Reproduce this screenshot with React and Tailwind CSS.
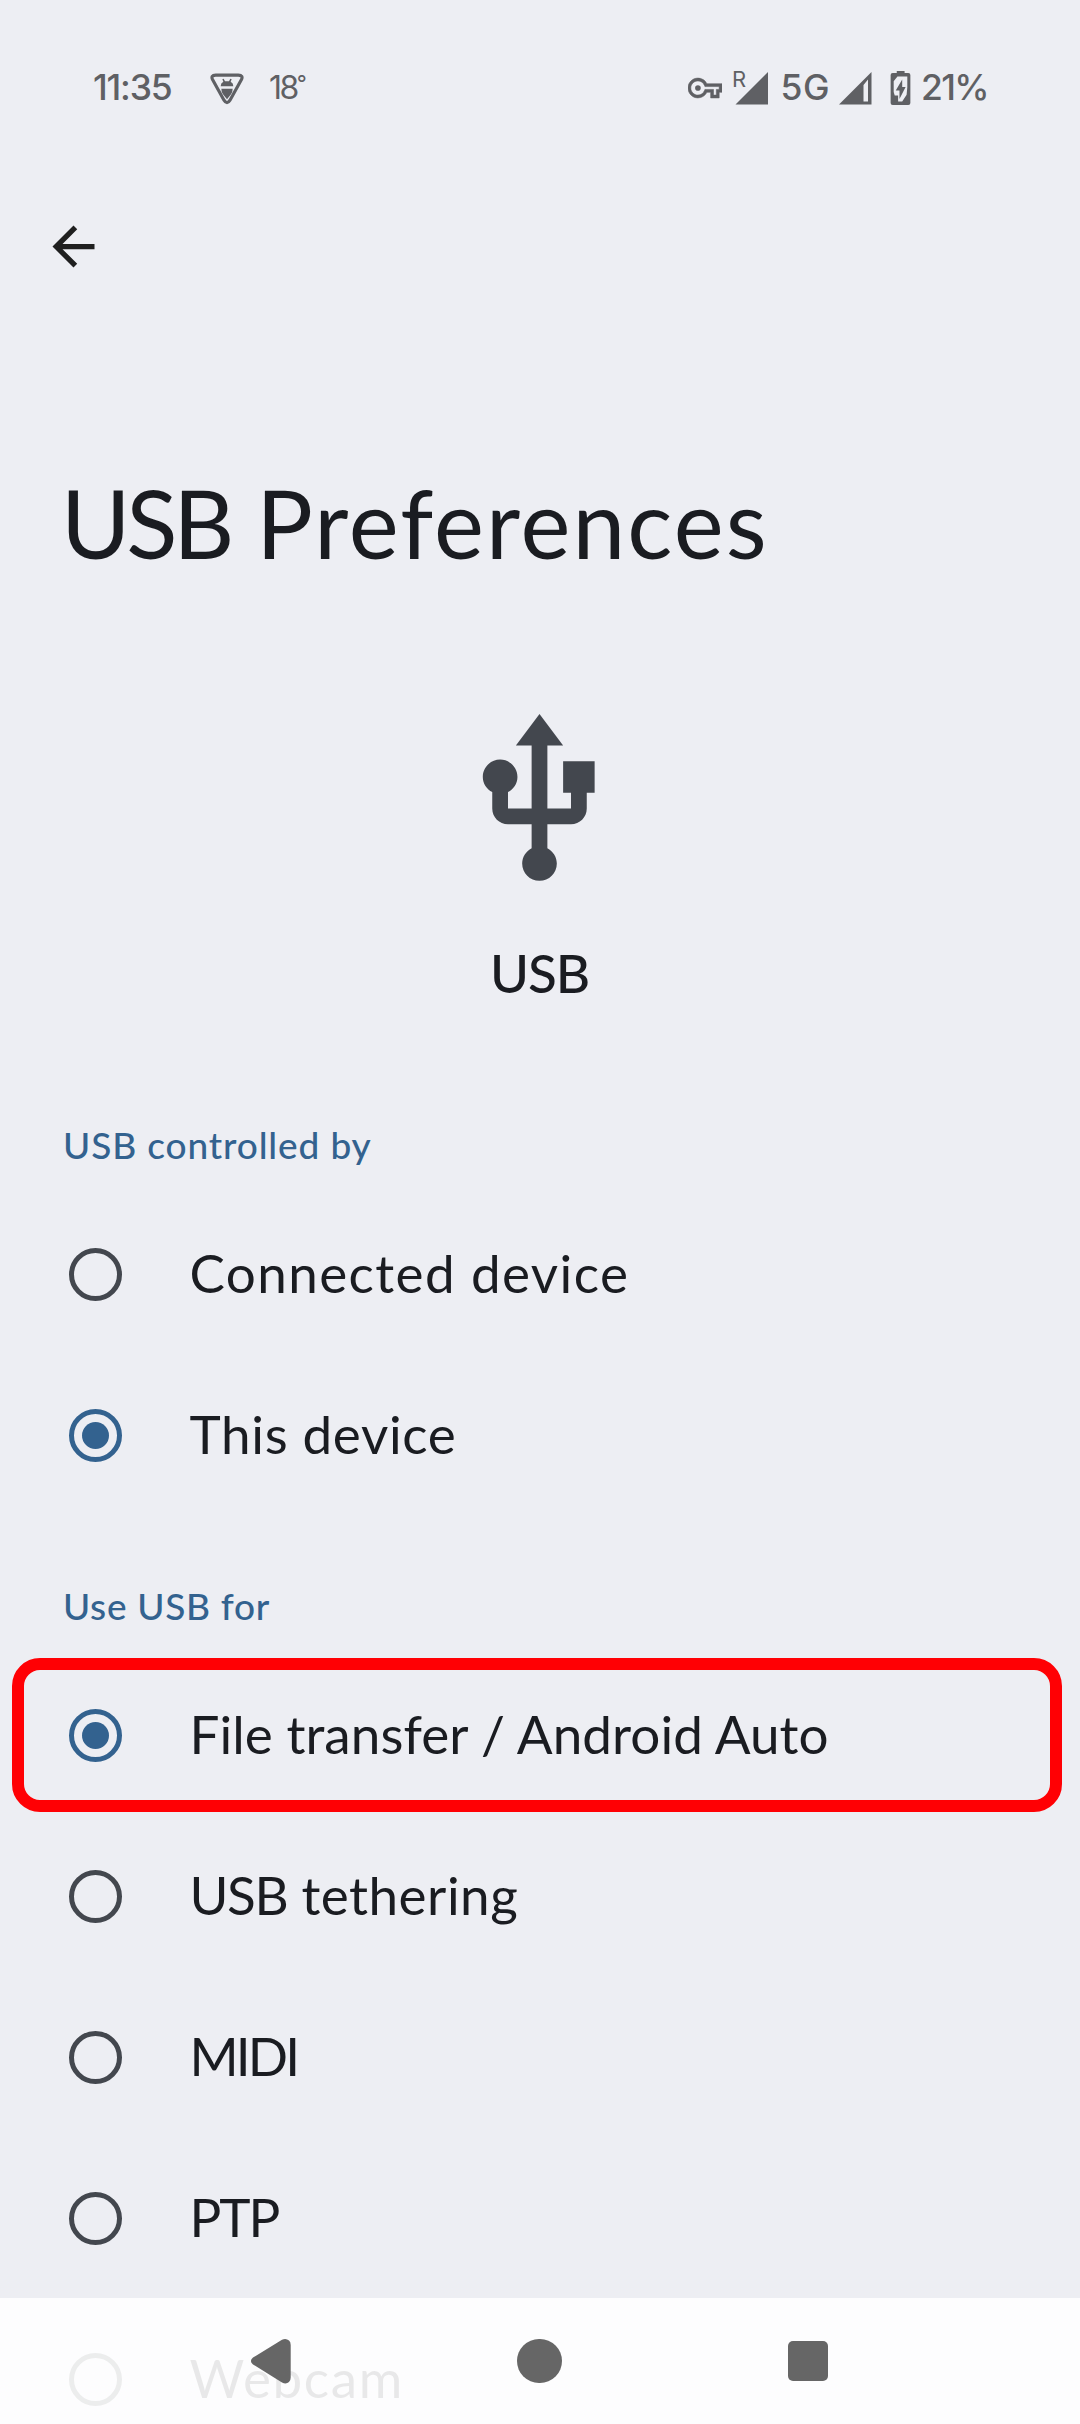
function Radio({ checked }) {
  return (
    <span
      className={`flex size-[53px] shrink-0 items-center justify-center rounded-full border-[5px] ${
        checked ? "border-[#33628f]" : "border-[#43474e]"
      }`}
    >
      {checked && <span className="size-[27px] rounded-full bg-[#33628f]" />}
    </span>
  );
}

function Option({ label, checked, tracking, marked }) {
  return (
    <label className="relative flex h-[161px] items-center pl-[68.5px]">
      <Radio checked={checked} />
      <span className={`ml-[68px] pb-[3px] text-[53px] leading-[64px] whitespace-nowrap ${tracking}`}>{label}</span>
      {marked && (
        <span className="absolute top-[2.5px] left-[12px] h-[154.5px] w-[1050px] rounded-[28px] border-[12px] border-[#ff0004]" />
      )}
    </label>
  );
}

function Section({ title, tracking, options }) {
  return (
    <section>
      <h2 className={`h-[139px] pt-[68px] pl-[63px] text-[37px] leading-[44px] font-medium text-[#33628f] ${tracking}`}>
        {title}
      </h2>
      {options.map((o, i) => (
        <Option key={i} {...o} />
      ))}
    </section>
  );
}

const controlledBy = [
  { label: "Connected device", tracking: "tracking-[1.4px]" },
  { label: "This device", tracking: "tracking-[0.67px]", checked: true },
];

const useFor = [
  { label: "File transfer / Android Auto", tracking: "tracking-[0.05px]", checked: true, marked: true },
  {
    label: (
      <>
        <span className="tracking-[-1.4px]">USB</span> tethering
      </>
    ),
    tracking: "tracking-[0.5px]",
  },
  { label: "MIDI", tracking: "tracking-[-2.9px]" },
  { label: "PTP", tracking: "tracking-[-2px]" },
  { label: "Webcam", tracking: "tracking-[1.6px]" },
];

function StatusBar() {
  return (
    <header className="flex h-[175px] items-center pl-[93px] font-['Inter',sans-serif] text-[35.5px] leading-[44px] font-medium text-[#5f6064]">
      <span className="w-[117px] tracking-[-1.2px]">11:35</span>
      <svg className="mt-[2px] h-[32px] w-[34px]" viewBox="0 0 102 95" fill="currentColor">
        <path
          d="M17 6H85Q101 6 94 20L60 81Q51 96 42 81L8 20Q1 6 17 6Z"
          fill="none"
          stroke="currentColor"
          strokeWidth="9.5"
        />
        <path d="M32 39Q32 30 40 26L37 18L41 17L45 24H57L61 17L65 18L62 26Q70 30 70 39Z" />
        <path d="M34 47H68Q68 57 63 63L51 78L39 63Q34 57 34 47Z" />
      </svg>
      <span className="ml-[25px] flex w-[419px] text-[32px] font-normal">
        <span className="tracking-[-2.5px]">18</span>
        <span className="-mt-[5px] text-[22px]">°</span>
      </span>
      <svg className="h-[34px] w-[34px]" viewBox="0 0 24 24" fill="currentColor">
        <path
          fillRule="evenodd"
          stroke="currentColor"
          strokeWidth="0.4"
          d="M22 19h-6v-4h-2.68c-1.14 2.42-3.6 4-6.32 4-3.86 0-7-3.14-7-7s3.14-7 7-7c2.72 0 5.17 1.58 6.32 4H24v6h-2v4zm-4-2h2v-4h2v-2H11.94l-.23-.67C11.01 8.34 9.11 7 7 7c-2.76 0-5 2.24-5 5s2.24 5 5 5c2.11 0 4.01-1.34 4.71-3.33l.23-.67H18v4z"
        />
        <circle cx="7" cy="12" r="2" />
      </svg>
      <span className="relative ml-[11px] h-[34px] w-[35px]">
        <svg className="size-full" viewBox="0 0 35 34" fill="currentColor">
          <path d="M2.5 33.5 35 1v32.5Z" />
        </svg>
        <span className="absolute -top-[6px] -left-[1px] text-[22px] leading-[28px] font-normal">R</span>
      </span>
      <span className="ml-[12.5px] w-[58.5px] tracking-[0.5px]">5G</span>
      <svg className="h-[34px] w-[33px]" viewBox="0 0 33 34" fill="currentColor">
        <path fillRule="evenodd" d="M0 33.5 32.5 1v32.5ZM24.5 14v16.5h4.5V8.5Z" />
      </svg>
      <svg className="ml-[18px] h-[34px] w-[21px]" viewBox="0 0 58 100">
        <path
          fill="currentColor"
          d="M18 0h23v6h11q6 0 6 6v82q0 6-6 6H6q-6 0-6-6V12q0-6 6-6h12z"
        />
        <path fill="#edeef3" d="M9 30L20 16H49V48L47 70L34 90H22V72H12L9 62Z" />
        <path fill="currentColor" d="M34 25 15 57h11v25l18-35H34z" />
      </svg>
      <span className="ml-[10px] tracking-[-1.7px]">21%</span>
    </header>
  );
}

function NavBar() {
  return (
    <nav className="absolute inset-x-0 bottom-0 flex h-[126px] items-center justify-between bg-white/90 pr-[252px] pl-[250px] text-[#666]">
      <svg className="h-[46px] w-[41px]" viewBox="0 0 41 46" fill="currentColor">
        <path d="M3 19.5 32 1.8Q36 -.2 39 2.6 40.7 4 40.7 7V39.5Q40.7 42.5 39 44 36 46.6 32 44.4L3 26.5Q-1.2 23 3 19.5Z" />
      </svg>
      <span className="size-[44.5px] rounded-full bg-[#666]" />
      <span className="size-[40.5px] rounded-[5px] bg-[#666]" />
    </nav>
  );
}

export default function App() {
  return (
    <div className="relative h-[2424px] w-[1080px] overflow-hidden bg-[#edeef3] font-['Lato',sans-serif] text-[#1a1c21]">
      <div className="flex flex-col">
        <StatusBar />
        <button className="mt-[40px] ml-[42px] size-[63px]" aria-label="Back">
          <svg className="size-full" viewBox="0 0 24 24" fill="#1f1f1f">
            <path d="M20 11H7.83l5.59-5.59L12 4l-8 8 8 8 1.41-1.41L7.83 13H20v-2z" />
          </svg>
        </button>
        <h1 className="mt-[195px] ml-[61px] text-[94.5px] leading-[100px] tracking-[2.1px]">
          <span className="tracking-[-4.3px]">USB</span> Preferences
        </h1>
        <div className="mt-[133px] flex h-[349px] flex-col items-center pr-[1px]">
          <svg className="size-[189px]" viewBox="0 0 24 24" fill="#43474e">
            <path d="M15 7v4h1v2h-3V5h2l-3-4-3 4h2v8H8v-2.07c.7-.37 1.2-1.08 1.2-1.93 0-1.21-.99-2.2-2.2-2.2-1.21 0-2.2.99-2.2 2.2 0 .85.5 1.56 1.2 1.93V13c0 1.11.89 2 2 2h3v3.05c-.71.37-1.2 1.1-1.2 1.95 0 1.22.99 2.2 2.2 2.2 1.21 0 2.2-.98 2.2-2.2 0-.85-.49-1.58-1.2-1.95V15h3c1.11 0 2-.89 2-2v-2h1V7h-4z" />
          </svg>
          <span className="mt-[46px] text-[53px] leading-[64px] font-medium tracking-[-1.1px]">USB</span>
        </div>
        <Section title="USB controlled by" tracking="tracking-[0.87px]" options={controlledBy} />
        <Section title="Use USB for" tracking="tracking-[0.7px]" options={useFor} />
      </div>
      <NavBar />
    </div>
  );
}
